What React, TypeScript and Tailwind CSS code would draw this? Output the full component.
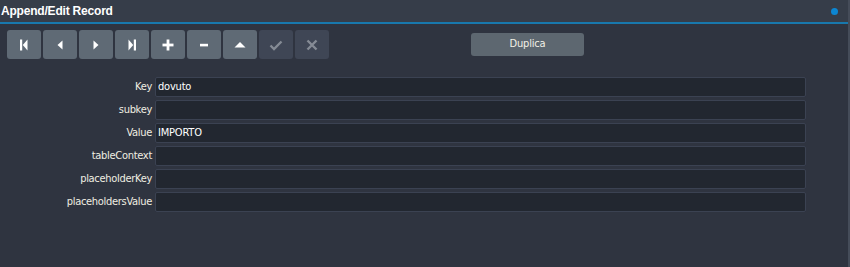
import { ReactNode } from "react"

const fields = [
  { label: "Key", value: "dovuto" },
  { label: "subkey", value: "" },
  { label: "Value", value: "IMPORTO" },
  { label: "tableContext", value: "" },
  { label: "placeholderKey", value: "" },
  { label: "placeholdersValue", value: "" },
]

function ToolButton({ children, disabled }: { children: ReactNode; disabled?: boolean }) {
  return (
    <button
      className={
        "w-[34px] h-[29px] rounded-[3px] flex items-center justify-center " +
        (disabled ? "bg-[#3f4655] text-[#858b95]" : "bg-[#5f6a75] text-white")
      }
    >
      <svg width="16" height="16" viewBox="0 0 16 16" fill="currentColor">
        {children}
      </svg>
    </button>
  )
}

export default function App() {
  return (
    <div className="w-[850px] h-[267px] bg-[#2f3440] flex flex-col font-['Liberation_Sans',Arial,sans-serif] border-r-2 border-[#454c59]">
      <div className="h-[24px] bg-[#363d49] flex items-center justify-between pl-px pr-[10px] border-b-2 border-[#1878ad]">
        <span className="text-white text-[12px] font-bold tracking-[-0.2px]">Append/Edit Record</span>
        <span className="w-[7px] h-[7px] rounded-full bg-[#0c86d2]" />
      </div>

      <div className="flex items-center pl-[7px] mt-[6px]">
        <div className="flex gap-[2px]">
          <ToolButton>
            <rect x="4" y="2.5" width="2.2" height="11" />
            <path d="M11.5 2.5 L6.8 8 L11.5 13.5 Z" />
          </ToolButton>
          <ToolButton>
            <path d="M10.5 3.5 L5.5 8 L10.5 12.5 Z" />
          </ToolButton>
          <ToolButton>
            <path d="M5.5 3.5 L10.5 8 L5.5 12.5 Z" />
          </ToolButton>
          <ToolButton>
            <path d="M4.5 2.5 L9.2 8 L4.5 13.5 Z" />
            <rect x="9.8" y="2.5" width="2.2" height="11" />
          </ToolButton>
          <ToolButton>
            <rect x="2.5" y="6.6" width="11" height="2.8" />
            <rect x="6.6" y="2.5" width="2.8" height="11" />
          </ToolButton>
          <ToolButton>
            <rect x="4" y="6.8" width="8" height="2.6" />
          </ToolButton>
          <ToolButton>
            <path d="M2.5 10.5 L8 5 L13.5 10.5 Z" />
          </ToolButton>
          <ToolButton disabled>
            <path d="M2.5 8.5 L6 12 L13.5 4.5" fill="none" stroke="currentColor" strokeWidth="2.3" />
          </ToolButton>
          <ToolButton disabled>
            <path d="M3.5 3.5 L12.5 12.5 M12.5 3.5 L3.5 12.5" fill="none" stroke="currentColor" strokeWidth="2.4" />
          </ToolButton>
        </div>
        <button className="ml-[142px] w-[113px] h-[23px] rounded-[3px] bg-[#5d6770] text-[#f2f0e6] text-[11px] tracking-[-0.2px] font-['DejaVu_Sans_Condensed','Liberation_Sans',sans-serif]">
          Duplica
        </button>
      </div>

      <div className="mt-[18px] flex flex-col gap-[3px] font-['DejaVu_Sans_Condensed','Liberation_Sans',sans-serif]">
        {fields.map((f) => (
          <div key={f.label} className="flex items-center">
            <label className="w-[155px] pr-[3px] text-right text-[11px] tracking-[-0.3px] text-[#f0eee2]">{f.label}</label>
            <div className="w-[651px] h-[20px] bg-[#222730] border border-[#3b4252] rounded-[2px] flex items-center px-[2px] text-[11px] tracking-[-0.2px] text-white">
              {f.value}
            </div>
          </div>
        ))}
      </div>
    </div>
  )
}
